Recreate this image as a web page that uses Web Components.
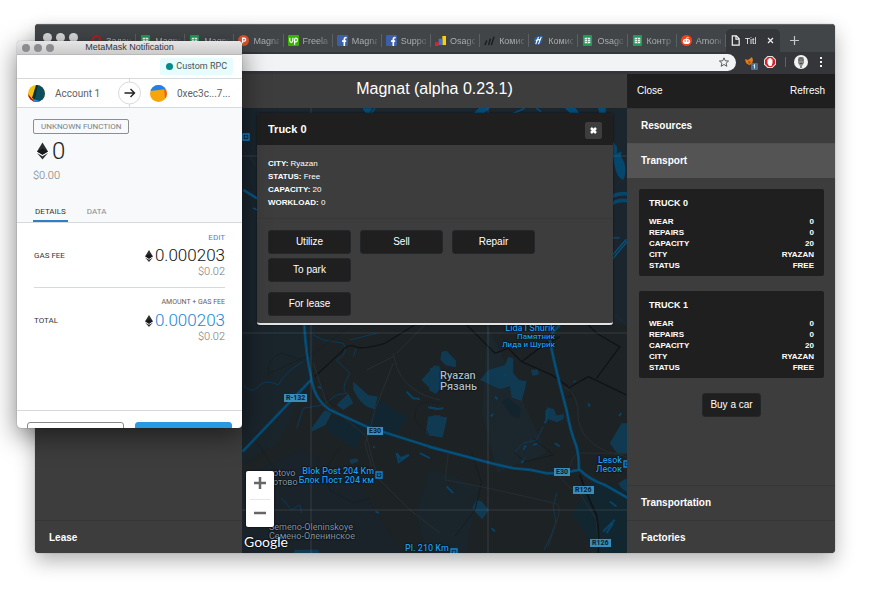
<!DOCTYPE html>
<html lang="en">
<head>
<meta charset="utf-8">
<title>Magnat</title>
<style>
  body {
    background: white;
    box-sizing: border-box;
    display: flex;
    font-family: "Liberation Sans", Arial, sans-serif;
    height: 100vh;
    margin: 0;
    min-height: 560px;
    overflow: hidden;
    padding: 24px 35px 47px;
    position: relative;
  }

  browser-window {
    flex: 1;
  }

  /* the wallet popup floats over the browser */
  wallet-window {
    left: 17px;
    position: absolute;
    top: 41px;
  }

  .game {
    display: grid;
    flex: 1;
    grid-template-columns: 207px 1fr 208px;
    min-height: 0;
  }

  .middle {
    display: flex;
    flex-direction: column;
    min-width: 0;
  }

  h1 {
    color: white;
    font-size: 16px;
    font-weight: normal;
    line-height: 30px;
    margin: 0;
    padding-bottom: 4px;
    text-align: center;
  }

  city-map {
    flex: 1;
  }
</style>
</head>
<body>

<browser-window>
  <browser-tab slot="tab" icon="opera">Задач</browser-tab>
  <browser-tab slot="tab" icon="sheets">Magna</browser-tab>
  <browser-tab slot="tab" icon="sheets">Magna</browser-tab>
  <browser-tab slot="tab" icon="hunt">Magna</browser-tab>
  <browser-tab slot="tab" icon="up">Freela</browser-tab>
  <browser-tab slot="tab" icon="fb">Magna</browser-tab>
  <browser-tab slot="tab" icon="fb">Suppo</browser-tab>
  <browser-tab slot="tab" icon="ads">Osago</browser-tab>
  <browser-tab slot="tab" icon="slashes">Комис</browser-tab>
  <browser-tab slot="tab" icon="globe">Комис</browser-tab>
  <browser-tab slot="tab" icon="sheets">Osago</browser-tab>
  <browser-tab slot="tab" icon="sheets">Контр</browser-tab>
  <browser-tab slot="tab" icon="reddit">Amone</browser-tab>
  <browser-tab slot="tab" icon="page" active>Titl</browser-tab>

  <div class="game">
    <side-panel>
      <panel-section slot="bottom" name="Lease"></panel-section>
    </side-panel>

    <main class="middle">
      <h1>Magnat (alpha 0.23.1)</h1>
      <city-map>
        <truck-dialog name="Truck 0" city="Ryazan" status="Free" capacity="20" workload="0"></truck-dialog>
      </city-map>
    </main>

    <side-panel bar>
      <panel-section name="Resources"></panel-section>
      <panel-section name="Transport" open>
        <truck-card name="TRUCK 0"></truck-card>
        <truck-card name="TRUCK 1"></truck-card>
        <game-button>Buy a car</game-button>
      </panel-section>
      <panel-section slot="bottom" name="Transportation"></panel-section>
      <panel-section slot="bottom" name="Factories"></panel-section>
    </side-panel>
  </div>
</browser-window>

<wallet-window></wallet-window>

<script>
// favicons, all drawn on a 12x12 grid
const icons = {
  opera: '<ellipse cx="6" cy="6" rx="4" ry="5" fill="none" stroke="#d0131f" stroke-width="2"/>',
  sheets: '<rect x="1" width="10" height="12" rx="1" fill="#1e9e55"/><path d="M3 3h6v6H3z" fill="#fff"/><path d="M3 5h6M3 7h6M6 3v6" stroke="#1e9e55" stroke-width=".7"/>',
  hunt: '<circle cx="6" cy="6" r="6" fill="#d9532c"/><path d="M5 9V3.500h1.700a1.500 1.500 0 0 1 0 3.200H5" fill="none" stroke="#fff" stroke-width="1.500"/>',
  up: '<rect width="12" height="12" rx="1" fill="#37b400"/><path d="M2 3v3q0 2 1.600 2T5.300 6V3M7.200 10.500V5q0-1.500 1.500-1.500T10.300 5.300 8.700 7.500H7.200" fill="none" stroke="#fff" stroke-width="1.300"/>',
  fb: '<rect width="12" height="12" rx="1" fill="#3b5fa8"/><path d="M8 12V4.500Q8 2.500 10.500 3M5.500 6.700H10" fill="none" stroke="#fff" stroke-width="1.800"/>',
  ads: '<path d="M8 1h4v10H8z" fill="#fbd009"/><path d="M4 4h4v7H4z" fill="#3f73d8"/><path d="M0 8h4v4H0z" fill="#e8202a"/>',
  slashes: '<path d="M1 11l2-5M5 11l2-7M8 11l3-9" stroke="#1b1d1f" stroke-width="1.600"/>',
  globe: '<path d="M1 6q0-4 5-5l5 0-1 5q-1 4-5 5-4-1-4-5z" fill="#295f9e"/><path d="M3 10l3-8M6 10l3-8M3 6q4-2 5 0" fill="none" stroke="#fff" stroke-width="1.200"/>',
  reddit: '<circle cx="6" cy="6" r="6" fill="#f4401d"/><ellipse cx="6" cy="7" rx="4" ry="2.800" fill="#fff"/><circle cx="4.500" cy="6.600" r=".8" fill="#f4401d"/><circle cx="7.500" cy="6.600" r=".8" fill="#f4401d"/><path d="M6 4.500l.6-2 2 .5" fill="none" stroke="#fff" stroke-width=".8"/>',
  page: '<path d="M2.500 1h4.500l3 3v7h-7.500zM6.500 1v3.500H10" fill="none" stroke="#f4f4f4" stroke-width="1.300"/>'
};

class BrowserTab extends HTMLElement {
  constructor() {
    super();
    const active = this.hasAttribute('active');
    this.attachShadow({ mode: 'open' }).innerHTML = `
    <style>
    :host {
        align-items: center;
        color: #a9acb0;
        display: flex;
        flex: 1 1 0;
        font: 9px/12px "Liberation Sans", Arial, sans-serif;
        gap: 4px;
        min-width: 0;
        padding-left: 4px;
    }

    :host(:not([active]))::after {
        background: #5c6064;
        content: "";
        height: 13px;
        width: 1px;
    }

    :host([active]) {
        background: #35363a;
        border-radius: 5px 5px 0 0;
        color: #eceded;
        padding-right: 5px;
    }

    svg {
        flex: none;
    }

    span {
        flex: 1;
        -webkit-mask-image: linear-gradient(to right, black 60%, rgba(0,0,0,0.3));
        mask-image: linear-gradient(to right, black 60%, rgba(0,0,0,0.3));
        min-width: 0;
        overflow: hidden;
        white-space: nowrap;
    }

    button {
        background: none;
        border: none;
        display: flex;
        padding: 0;
    }
    </style>
    <svg width="11" height="11" viewBox="0 0 12 12">${icons[this.getAttribute('icon')]}</svg>
    <span><slot></slot></span>
    ${active ? '<button aria-label="Close tab"><svg width="9" height="9" viewBox="0 0 9 9"><path d="M2 2l5 5M7 2L2 7" stroke="#eee" stroke-width="1.200"/></svg></button>' : ''}`;
  }
}

class BrowserWindow extends HTMLElement {
  constructor() {
    super();
    this.attachShadow({ mode: 'open' }).innerHTML = `
    <style>
    :host {
        background: #3d3d3d;
        border-radius: 4px;
        box-shadow: 0 0 1px rgba(0,0,0,0.5), 0 8px 20px rgba(0,0,0,0.3);
        display: flex;
        flex-direction: column;
        min-width: 0;
        overflow: hidden;
    }

    .strip {
        background: #414548;
        border-top: 1px solid #5f6366;
        display: flex;
        padding-top: 4px;
        height: 23px;
    }

    .lights {
        display: flex;
        gap: 4px;
        padding: 4px 9px 0 8px;
    }

    .lights i {
        background: #d9dadb;
        border-radius: 50%;
        height: 9px;
        width: 9px;
    }

    .tabs {
        display: flex;
        flex: 1;
        min-width: 0;
    }

    button {
        align-items: center;
        background: none;
        border: none;
        display: flex;
        padding: 0;
    }

    .new {
        padding: 0 36px 0 10px;
    }

    .bar {
        align-items: center;
        background: #35363a;
        display: flex;
        height: 20px;
        padding: 0 7px 2px 0;
    }

    .omnibox {
        align-items: center;
        background: #f1f3f4;
        border-radius: 9px;
        display: flex;
        flex: 1;
        height: 17px;
        margin-right: 9px;
        min-width: 0;
        padding-right: 7px;
    }

    input {
        background: none;
        border: none;
        flex: 1;
        min-width: 0;
        outline: none;
        padding: 0 0 0 20px;
    }

    .extensions {
        display: flex;
        gap: 6px;
        align-items: center;
    }
    </style>
    <div class="strip">
      <div class="lights"><i></i><i></i><i></i></div>
      <div class="tabs"><slot name="tab"></slot></div>
      <button class="new" aria-label="New tab"><svg width="9" height="9" viewBox="0 0 9 9"><path d="M4.500 0v9M0 4.500h9" stroke="#c4c7ca" stroke-width="1.200"/></svg></button>
    </div>
    <div class="bar">
      <div class="omnibox">
        <input type="text" aria-label="Address">
        <button aria-label="Bookmark"><svg width="10" height="10" viewBox="0 0 24 24"><path d="M12 2l3 7 8 .7-6 5 1.800 7.600L12 18l-6.800 4.300L7 14.700 1 9.700 9 9z" fill="none" stroke="#4c4f53" stroke-width="2.200"/></svg></button>
      </div>
      <div class="extensions">
        <svg width="13" height="15" viewBox="0 0 13 15"><path d="M0 4l3 1 4-3 1 3-1 4-3 1-3-2z" fill="#e17d1c"/><path d="M3 6l3 1-2 2" fill="#8c4a17"/><rect x="6" y="8" width="7" height="7" rx="1" fill="#4a6f94"/><path d="M8.500 10.500l1-1V13.500" fill="none" stroke="#dfe8f0"/></svg>
        <svg width="12" height="12" viewBox="0 0 12 12"><path d="M3.500 0h5L12 3.500v5L8.500 12h-5L0 8.500v-5z" fill="#e3e3e3"/><path d="M4 1h4l3 3v4l-3 3H4L1 8V4z" fill="#d8232a"/><path d="M3.500 5V3.500h1V2.500h1V2h1v.5h1v1h1V7l-1 3h-2.500L3.500 7.500z" fill="#fff"/></svg>
        <svg width="6" height="12" viewBox="0 0 6 12"><path d="M3.500 1v10" stroke="#5f6368"/></svg>
        <svg width="14" height="14" viewBox="0 0 14 14"><circle cx="7" cy="7" r="7" fill="#f2f2f2"/><path d="M4 4q3-4 6 0v4l-2 3v2H6v-2L4 8z" fill="#8b8b8b"/><path d="M4.500 4.500h2v1h-2zM7.500 4.500h2v1h-2zM5.500 8h3v1h-3zM4.500 2.500h5v1h-5z" fill="#4c4c4c"/></svg>
        <svg width="14" height="12" viewBox="0 0 14 12"><path d="M6 1h2v2H6zM6 5h2v2H6zM6 9h2v2H6z" fill="#f1f3f4"/></svg>
      </div>
    </div>
    <slot></slot>`;
  }
}

class SidePanel extends HTMLElement {
  constructor() {
    super();
    const bar = this.hasAttribute('bar');
    this.attachShadow({ mode: 'open' }).innerHTML = `
    <style>
    :host {
        background: #3d3d3d;
        display: flex;
        flex-direction: column;
        justify-content: space-between;
        min-width: 0;
    }

    header {
        background: #1f1f1f;
        display: flex;
        justify-content: space-between;
        padding: 0 10px;
    }

    header button {
        background: none;
        border: none;
        color: white;
        font: 10px/34px "Liberation Sans", Arial, sans-serif;
        padding: 0;
    }

    /* the list goes on a little under the window edge */
    .bottom {
        margin-bottom: -2px;
    }
    </style>
    <div>
      ${bar ? '<header><button>Close</button><button>Refresh</button></header>' : ''}
      <slot></slot>
    </div>
    <div class="bottom"><slot name="bottom"></slot></div>`;
  }
}

class PanelSection extends HTMLElement {
  constructor() {
    super();
    this.attachShadow({ mode: 'open' }).innerHTML = `
    <style>
    :host {
        color: white;
        display: block;
    }

    h2 {
        border-top: 1px solid #363636;
        font-size: 10px;
        line-height: 34px;
        margin: 0;
        padding-left: 14px;
    }

    :host([open]) h2 {
        background: #545454;
        border-top-color: #505050;
    }

    .content {
        align-items: center;
        display: none;
        flex-direction: column;
        gap: 15px;
        padding: 11px 11px 0 12px;
    }

    :host([open]) .content {
        display: flex;
    }
    </style>
    <h2>${this.getAttribute('name')}</h2>
    <div class="content"><slot></slot></div>`;
  }
}

class TruckCard extends HTMLElement {
  constructor() {
    super();
    const rows = [['WEAR', '0'], ['REPAIRS', '0'], ['CAPACITY', '20'], ['CITY', 'RYAZAN'], ['STATUS', 'FREE']];
    this.attachShadow({ mode: 'open' }).innerHTML = `
    <style>
    :host {
        align-self: stretch;
        background: #1f1f1f;
        border-radius: 2px;
        display: block;
        font-weight: bold;
        padding: 8px 10px 5px;
    }

    h3 {
        font-size: 9px;
        line-height: 12px;
        margin: 0 0 7px;
    }

    dl {
        font-size: 8px;
        line-height: 11px;
        margin: 0;
    }

    dl div {
        display: flex;
        justify-content: space-between;
    }

    dd {
        margin: 0;
    }
    </style>
    <h3>${this.getAttribute('name')}</h3>
    <dl>${rows.map(r => `<div><dt>${r[0]}</dt><dd>${r[1]}</dd></div>`).join('')}</dl>`;
  }
}

class GameButton extends HTMLElement {
  constructor() {
    super();
    this.attachShadow({ mode: 'open' }).innerHTML = `
    <style>
    :host {
        display: block;
    }

    button {
        background: #1f1f1f;
        border: 1px solid #24272a;
        border-radius: 3px;
        color: white;
        font: 10px/22px "Liberation Sans", Arial, sans-serif;
        padding: 0 7px;
        width: 100%;
    }
    </style>
    <button><slot></slot></button>`;
  }
}

class TruckDialog extends HTMLElement {
  constructor() {
    super();
    const info = ['city', 'status', 'capacity', 'workload'];
    this.attachShadow({ mode: 'open' }).innerHTML = `
    <style>
    :host {
        background: #3d3d3d;
        border-bottom: 2px solid #e4e4e4;
        border-radius: 3px;
        box-shadow: 0 0 2px rgba(0,0,0,0.7);
        color: white;
        display: block;
        overflow: hidden;
    }

    header {
        align-items: center;
        background: #1f1f1f;
        display: flex;
        height: 32px;
        justify-content: space-between;
        padding: 0 11px;
    }

    h2 {
        font-size: 11px;
        margin: 0;
    }

    header button {
        background: #3d3d3d;
        border: none;
        border-radius: 2px;
        display: flex;
        margin-top: 3px;
        padding: 4px;
    }

    ul {
        border-bottom: 1px solid #383838;
        font-size: 8px;
        line-height: 13px;
        list-style: none;
        margin: 0;
        padding: 12px 11px 9px;
    }

    .actions {
        display: grid;
        gap: 4px 9px;
        grid-template-columns: repeat(3, 83px);
        padding: 11px 11px 7px;
    }

    .lease {
        grid-column: 1;
        margin-top: 6px;
    }
    </style>
    <header>
      <h2>${this.getAttribute('name')}</h2>
      <button aria-label="Close"><svg width="9" height="9" viewBox="0 0 9 9"><path d="M2 2l5 5M7 2L2 7" stroke="#fff" stroke-width="2.500"/></svg></button>
    </header>
    <ul>${info.map(k => `<li><b>${k.toUpperCase()}:</b> ${this.getAttribute(k)}</li>`).join('')}</ul>
    <div class="actions">
      <game-button>Utilize</game-button>
      <game-button>Sell</game-button>
      <game-button>Repair</game-button>
      <game-button>To park</game-button>
      <game-button class="lease">For lease</game-button>
    </div>`;
  }
}

// one name on the map, x is the left edge, or the right one when it has "end"
class MapLabel extends HTMLElement {
  constructor() {
    super();
    this.attachShadow({ mode: 'open' }).innerHTML = `
    <style>
    :host {
        color: #1e9af0;
        display: block;
        font: 500 9px/9px Roboto, sans-serif;
        left: ${this.getAttribute('x')}px;
        position: absolute;
        text-shadow: 0 0 2px #000, 0 0 1px #000;
        top: ${this.getAttribute('y')}px;
    }

    div {
        white-space: pre-line;
    }

    :host([end]) {
        text-align: right;
        transform: translateX(-100%);
    }

    :host([kind="small"]) {
        font-size: 8px;
        line-height: 8px;
    }

    :host([kind="village"]) {
        color: #8497a4;
        font-weight: 400;
    }

    :host([kind="city"]) {
        color: #a9bbc6;
        font-size: 11px;
        line-height: 11px;
    }

    :host([kind="road"]) {
        background: #3a8cba;
        color: #06202f;
        font-size: 7px;
        font-weight: 700;
        line-height: 8px;
        padding: 0 2px;
        text-shadow: none;
    }
    </style>
    <div><slot></slot></div>`;
  }
}

class CityMap extends HTMLElement {
  constructor() {
    super();
    const station = '<path d="M1 1h6v6H1z" fill="#06243a" stroke="#1787d4" stroke-width="1.300"/><path d="M3 3h2v1.500H3zM3 6h.5M5 6h.5" fill="none" stroke="#1787d4" stroke-width=".8"/>';
    this.attachShadow({ mode: 'open' }).innerHTML = `
    <style>
    :host {
        background: #1d2124;
        display: block;
        overflow: hidden;
        position: relative;
    }

    svg.map {
        display: block;
        height: 100%;
        left: 0;
        position: absolute;
        top: 0;
        width: 100%;
    }

    ::slotted(truck-dialog) {
        left: 15px;
        position: absolute;
        right: 14px;
        top: 5px;
    }

    .zoom {
        background: white;
        border-radius: 2px;
        bottom: 26px;
        box-shadow: 0 0 2px #000;
        left: 4px;
        padding: 0 4px;
        position: absolute;
        width: 20px;
    }

    .zoom button {
        background: none;
        border: none;
        display: block;
        height: 28px;
        padding: 0 3px;
        width: 20px;
    }

    .zoom button + button {
        border-top: 1px solid #e6e6e6;
    }

    .logo {
        bottom: 3px;
        color: white;
        font: 14px/16px Lato, sans-serif;
        left: 2px;
        position: absolute;
        text-decoration: none;
        text-shadow: 0 0 2px #000, 0 0 1px #000;
    }
    </style>
    <svg class="map" viewBox="0 0 385 445" preserveAspectRatio="xMidYMid slice">
      <rect width="385" height="445" fill="#1d2225"/>
      <path d="M0 0h385v215H0z" fill="#1a252d"/>
      <path d="M0 215h75l-8 60-30 60-37 20z" fill="#1a242b"/>
      <path d="M0 370l60-30 60 40 40 65H0z" fill="#1a2329"/>
      <path d="M245 215l60 130-50 20-15-60z" fill="#1b262d"/>
      <path d="M352 372l33 10v63h-30l-25-40z" fill="#12262f"/>
      <path d="M188 360l50 18-14 67h-40l-10-40z" fill="#19242b"/>

      <!-- strips around the dialog -->
      <g transform="translate(-2 -8) scale(.333)">
        <path d="M370 25l14 18 10-18M405 25l-15 20M700 45l20-20h25l-20 20zM810 45l45-20M890 25l14 10M980 25l20 20h20l-15-20zM1078 25h18v15h-14z" fill="#064a75" stroke="#064a75" stroke-width="5"/>
        <path d="M1120 125l12 15 0 20 14-5-2 15q22 30 8 72-22-10-28-50l-8-50z" fill="#05466c"/>
        <path d="M1115 290q25-12 50-8M1115 312q25-15 50-9" fill="none" stroke="#05466c" stroke-width="11"/>
        <path d="M1115 482l50-60M1115 470l45-52M1115 414h25" fill="none" stroke="#06517d" stroke-width="4"/>
        <path d="M10 270l45 28" stroke="#075585" stroke-width="8"/>
        <path d="M8 120l40 80M8 150q20 30 44 40M1120 265l45-40M1120 640l45 40" fill="none" stroke="#222b31" stroke-width="3"/>
        <path d="M40 325l12 5" stroke="#075585" stroke-width="4"/>
      </g>

      <!-- south west -->
      <g transform="translate(-2 212) scale(.333)">
        <path d="M280 290l100 30 40-80 85 55-50 60-90-10-20 45-90-65z" fill="#112630"/>
        <path d="M290 255l35-35 15 30-30 20zM340 185l45 40 28 5-8 38q-40-5-65-60zM215 325l25-35 15-20 20 10-18 35-40 20zM545 180l40-45 25 20v45l-25 20zM565 290l35-5v65l-42-10zM328 420l25-5 2 10-20 8zM165 690h70l5 10h-80z" fill="#103a52"/>
        <path d="M470 400l12 15 25-10-30 22zM500 215l20 20 20 2M565 262l30 5M540 400l30 15M400 380l5 3M235 200l8 5M407 575l10 5" fill="none" stroke="#0a4266" stroke-width="6"/>
        <path d="M10 195q25 30 45 5t60-5q20-40 75-70M220 45l30 15 60 10q20 30-20 50l40 40q-30 50-10 60l-30 5-40 30-60 10-20 60M340 110l10-30M330 60l80-20M125 535l30 35 25-15 5 25" fill="none" stroke="#0a3a58" stroke-width="3"/>
        <path d="M85 170q-5-60 40-70l60 20M90 160l130-60 110-80M50 365l70 110M300 380l-50 80 20 50 70 40 50-15M600 250q-90-20-70 60l60 50M260 230l20 35" fill="none" stroke="#171c1f" stroke-width="2"/>
        <path d="M225 170l80-75q20-25 40-15t90-10l90-55" fill="none" stroke="#101417" stroke-width="4"/>
        <path d="M220 130l40 120 120 100 20 80 20 50 90 90 90 70M460 100l10 40q30 80 130 100M470 100l90-90M460 110l-80 40M460 130l-55 140-15 60-15 40 20 70" fill="none" stroke="#282e32" stroke-width="3"/>
        <path d="M193 15q5 90 22 165 10 60 55 90l110 50 220 70M8 395l205-215" fill="none" stroke="#064467" stroke-width="9"/>
        <path d="M193 15q5 90 22 165 10 60 55 90l110 50 220 70M8 395l205-215" fill="none" stroke="#0b5d8b" stroke-width="2"/>
      </g>

      <!-- south east -->
      <g transform="translate(188 212) scale(.333)">
        <path d="M35 95l15-3 28 30v20l-30-5-17-18zM0 145l28-8 5 65-15 20-20-10zM150 180l25-30 50-15 10-25 15 5v45l18 20 22 3-5 25-10 35-30-10-5-35-30 10zM10 285l42 8-14 60-43-6zM350 262l22 5 8 20 22-5v15l-20 10-30-10zM540 370l35-60h25v90l-35 5zM565 490l25-15 5 45-20-15zM140 540l15 5 22 25-20 28-20-20-10-15zM303 150l20-2 5 15-20 5z" fill="#103a52"/>
        <path d="M215 245l20-10 38 30-6 30-20-5z" fill="#12242e"/>
        <path d="M0 262l20 5 20-2M195 230l8 8M182 290l8-8M350 270v30l-6 10M375 370l15 10M275 430l8-14M280 390l8-14M185 625l10 10M540 545l20 15M530 640l20-30M555 600l-35 35M475 250l5 10M575 280l-8 8M220 170l8-8M433 182l2 5M50 500l20 20M310 375l12-3" fill="none" stroke="#0a4266" stroke-width="6"/>
        <path d="M380 520l-10 40 8 50-20 50-15 30M250 400l30-30 40-10 20-40" fill="none" stroke="#0b3b58" stroke-width="3"/>
        <path d="M105 10l90 90 40-15 40 40 90 40 50 35M275 125l80-60M415 205l60-35 115 55M500 175l70-95-70-40-40-40M355 70l35-20" fill="none" stroke="#101417" stroke-width="4"/>
        <path d="M125 400l30 90-20 80-60 80M250 395q20 20 40 30l80-20-60-50M410 230l15 0-5-20" fill="none" stroke="#171c1f" stroke-width="3"/>
        <path d="M400 200q50 20 45 100 20 90 145 110M45 480l130 25 200 45q20 5 10 40l-30 90M420 440q10-50 50-40h120M390 470q30 40 60 50l50 80 5 90M55 400l-10 80" fill="none" stroke="#262d31" stroke-width="3"/>
        <path d="M450 465q25 70 50 120 10 50 5 115" fill="none" stroke="#0f1417" stroke-width="5"/>
        <path d="M-5 380l125 33q70 20 130 32l50 5 50 10h40l60-10q30 30 75 45l70 40M360 60q10 60 50 210 10 60 30 110 8 30 7 70M365 40l25-25" fill="none" stroke="#06456a" stroke-width="9"/>
        <path d="M-5 380l125 33q70 20 130 32l50 5 50 10h40l60-10q30 30 75 45l70 40M360 60q10 60 50 210 10 60 30 110 8 30 7 70" fill="none" stroke="#0b5d8b" stroke-width="2"/>
      </g>

      <path d="M69 0v445M246 0v445M0 48h385M0 225h385M0 402h385" stroke="#aab4bb" stroke-opacity=".18"/>
      <g transform="translate(0 25)">${station}</g>
      <g transform="translate(133 363)">${station}</g>
      <g transform="translate(208 440)">${station}</g>
      <g transform="translate(381 352)">${station}</g>
    </svg>

    <map-label end x="313" y="216">Lida I Shurik</map-label>
    <map-label end kind="small" x="313" y="225">Памятник
      Лида и Шурик</map-label>
    <map-label kind="city" x="198" y="262">Ryazan
      Рязань</map-label>
    <map-label kind="road" x="42" y="286">R-132</map-label>
    <map-label kind="road" x="125" y="319">E30</map-label>
    <map-label kind="road" x="312" y="360">E30</map-label>
    <map-label kind="road" x="331" y="378">R126</map-label>
    <map-label kind="road" x="348" y="431">R126</map-label>
    <map-label end x="132" y="359">Blok Post 204 Km
      Блок Пост 204 км</map-label>
    <map-label end x="380" y="348">Lesok
      Лесок</map-label>
    <map-label kind="village" x="31" y="361">otovo
      отово</map-label>
    <map-label kind="village" x="27" y="415">Semeno-Oleninskoye
      Семено-Оленинское</map-label>
    <map-label x="163" y="436">Pl. 210 Km</map-label>

    <div class="zoom">
      <button aria-label="Zoom in"><svg width="14" height="14" viewBox="0 0 14 14"><path d="M7 0v12M1 6h12" stroke="#666" stroke-width="2.500"/></svg></button>
      <button aria-label="Zoom out"><svg width="14" height="14" viewBox="0 0 14 14"><path d="M1 8h12" stroke="#666" stroke-width="2.500"/></svg></button>
    </div>
    <a class="logo" href="#">Google</a>
    <slot></slot>`;
  }
}

const eth = size => `<svg width="${size / 2 + 2}" height="${size}" viewBox="0 0 11 17"><path d="M5.500 0L11 9l-5.500 3.300L0 9z" fill="#2c2d31"/><path d="M5.500 6L11 9l-5.500 3.300L0 9z" fill="#17181b"/><path d="M0 10.500l5.500 3.200 5.500-3.200L5.500 17z" fill="#333438"/></svg>`;

// a line with the amount in ether and in dollars
class WalletFee extends HTMLElement {
  constructor() {
    super();
    this.attachShadow({ mode: 'open' }).innerHTML = `
    <style>
    :host {
        align-items: center;
        display: flex;
        justify-content: space-between;
        line-height: 11px;
        padding: 9px 0;
    }

    .label {
        color: #33363a;
        font-size: 8px;
    }

    .amounts {
        align-items: flex-end;
        display: flex;
        flex-direction: column;
    }

    .value {
        align-items: center;
        color: var(--value, #111);
        display: flex;
        font-size: 17px;
        font-weight: 300;
        gap: 2px;
        line-height: 19px;
        margin-top: 3px;
    }

    .usd {
        color: #74787d;
        font-size: 11px;
        font-weight: 300;
        line-height: 13px;
    }
    </style>
    <span class="label">${this.getAttribute('label')}</span>
    <div class="amounts">
      <slot></slot>
      <span class="value">${eth(12)}0.000203</span>
      <span class="usd">$0.02</span>
    </div>`;
  }
}

class WalletWindow extends HTMLElement {
  constructor() {
    super();
    this.attachShadow({ mode: 'open' }).innerHTML = `
    <style>
    :host {
        background: white;
        border-radius: 4px;
        box-shadow: 0 0 1px rgba(0,0,0,0.6), 0 8px 26px rgba(0,0,0,0.5);
        color: #33363a;
        display: block;
        font-family: Roboto, sans-serif;
        overflow: hidden;
        width: 225px;
    }

    .title {
        align-items: center;
        background: linear-gradient(#e6e6e6, #cbcbcb);
        border-bottom: 1px solid #b9b9b9;
        display: grid;
        font: 9px/13px "Liberation Sans", Arial, sans-serif;
        grid-template-columns: 1fr auto 1fr;
    }

    .title div {
        display: flex;
        gap: 4px;
        padding-left: 5px;
    }

    .title i {
        background: #8c8b90;
        border-radius: 50%;
        height: 8px;
        width: 8px;
    }

    .network {
        border-bottom: 1px solid #d5dade;
        display: flex;
        height: 23px;
        justify-content: flex-end;
        padding-right: 9px;
    }

    .network button {
        align-items: center;
        background: #e6fcfd;
        border: none;
        border-radius: 2px;
        color: #4a5257;
        display: flex;
        font: 9px/17px Roboto, sans-serif;
        gap: 3px;
        margin: 3px 0;
        padding: 0 6px;
    }

    .network i {
        background: #048a8b;
        border-radius: 50%;
        height: 7px;
        width: 7px;
    }

    .accounts {
        align-items: center;
        border-bottom: 1px solid #d5dade;
        display: grid;
        font-size: 10px;
        grid-template-columns: 1fr 23px 1fr;
        height: 28px;
    }

    .accounts div {
        align-items: center;
        color: #5b5f63;
        display: flex;
        gap: 10px;
        padding-left: 11px;
    }

    .accounts div:last-child {
        padding-left: 9px;
    }

    .summary {
        align-items: flex-start;
        background: #f7f9fa;
        border-bottom: 1px solid #d5dade;
        display: flex;
        flex-direction: column;
        padding: 11px 16px 0;
    }

    .chip {
        border: 1px solid #8b8f93;
        border-radius: 2px;
        color: #7d8185;
        font-size: 8px;
        line-height: 13px;
        padding: 0 7px;
    }

    .amount {
        align-items: center;
        color: #222;
        display: flex;
        font-size: 24px;
        font-weight: 300;
        gap: 4px;
        line-height: 28px;
        margin: 3px 0 4px 4px;
    }

    .usd {
        color: #74787d;
        font-size: 11px;
        font-weight: 300;
        line-height: 13px;
    }

    nav {
        display: flex;
        gap: 17px;
        margin-top: 21px;
    }

    nav button {
        background: none;
        border: none;
        border-bottom: 2px solid transparent;
        color: #85898d;
        font: 8px/17px Roboto, sans-serif;
        padding: 0 2px;
    }

    nav button.on {
        border-color: #2f7fc4;
        color: #33363a;
    }

    .fees {
        padding: 0 17px 58px;
    }

    wallet-fee + wallet-fee {
        --value: #1c86d8;
        border-top: 1px solid #d5dade;
    }

    a {
        color: #2f8fdd;
        font-size: 8px;
        text-decoration: none;
    }

    small {
        color: #5d6165;
        font-size: 7px;
    }

    /* only the top of the confirm row fits in the popup */
    footer {
        border-top: 1px solid #d5dade;
        display: grid;
        gap: 11px;
        grid-template-columns: 1fr 1fr;
        height: 6px;
        padding: 11px 10px 0;
    }

    footer button {
        background: white;
        border: 1px solid #85898d;
        border-radius: 3px;
        height: 26px;
    }

    footer button + button {
        background: #2b98e2;
        border-color: #2b98e2;
    }
    </style>
    <div class="title"><div><i></i><i></i><i></i></div>MetaMask Notification</div>
    <div class="network"><button><i></i>Custom RPC</button></div>
    <div class="accounts">
      <div>
        <svg width="17" height="17" viewBox="0 0 17 17"><clipPath id="a"><circle cx="8.500" cy="8.500" r="8.500"/></clipPath><g clip-path="url(#a)"><path d="M0 0h17v17H0z" fill="#f3c213"/><path d="M9 0h8v17H4z" fill="#0b4f5f"/><path d="M10 0l-2 0-4 13 3 1z" fill="#0a3038"/><path d="M0 9l7 8H0z" fill="#c8102e"/><path d="M5 14l10 3H5z" fill="#1a8cf0"/></g></svg>
        Account 1
      </div>
      <svg width="23" height="28" viewBox="0 0 23 28"><path d="M11.500 0v28" stroke="#d5dade"/><circle cx="11.500" cy="14" r="11" fill="#fff" stroke="#d5dade"/><path d="M6.500 14h10M12.500 10l4 4-4 4" fill="none" stroke="#222" stroke-width="1.400"/></svg>
      <div>
        <svg width="17" height="17" viewBox="0 0 17 17"><clipPath id="b"><circle cx="8.500" cy="8.500" r="8.500"/></clipPath><g clip-path="url(#b)"><path d="M0 0h17v17H0z" fill="#f5a60a"/><path d="M0 0h17v4L0 6z" fill="#1f80ee"/><path d="M14 4h3v9h-2z" fill="#e9622c"/></g></svg>
        0xec3c...7...
      </div>
    </div>
    <div class="summary">
      <span class="chip">UNKNOWN FUNCTION</span>
      <div class="amount">${eth(18)}0</div>
      <span class="usd">$0.00</span>
      <nav><button class="on">DETAILS</button><button>DATA</button></nav>
    </div>
    <div class="fees">
      <wallet-fee label="GAS FEE"><a href="#">EDIT</a></wallet-fee>
      <wallet-fee label="TOTAL"><small>AMOUNT + GAS FEE</small></wallet-fee>
    </div>
    <footer><button aria-label="Reject"></button><button aria-label="Confirm"></button></footer>`;
  }
}

customElements.define('game-button', GameButton);
customElements.define('browser-tab', BrowserTab);
customElements.define('browser-window', BrowserWindow);
customElements.define('side-panel', SidePanel);
customElements.define('panel-section', PanelSection);
customElements.define('truck-card', TruckCard);
customElements.define('truck-dialog', TruckDialog);
customElements.define('map-label', MapLabel);
customElements.define('city-map', CityMap);
customElements.define('wallet-fee', WalletFee);
customElements.define('wallet-window', WalletWindow);
</script>
</body>
</html>
